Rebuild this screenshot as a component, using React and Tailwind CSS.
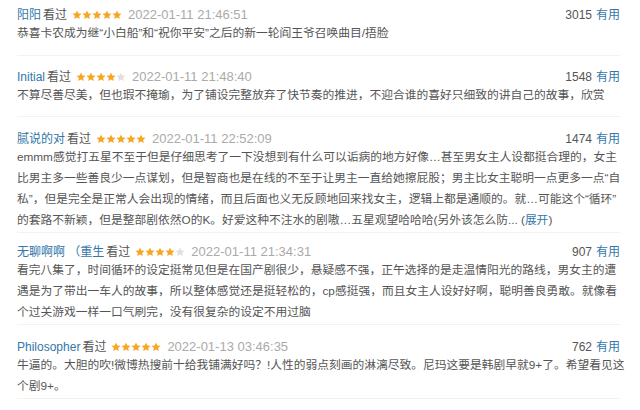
import React from 'react';

const reviews = [
  {
    name: '阳阳',
    stars: 5,
    time: '2022-01-11 21:46:51',
    votes: 3015,
    pt: 'pt-[8px]',
    pb: 'pb-[12px]',
    lines: ['恭喜卡农成为继“小白船”和“祝你平安”之后的新一轮阎王爷召唤曲目/捂脸'],
  },
  {
    name: 'Initial',
    stars: 4,
    time: '2022-01-11 21:48:40',
    votes: 1548,
    pt: 'pt-[14px]',
    pb: 'pb-[11px]',
    lines: ['不算尽善尽美，但也瑕不掩瑜，为了铺设完整放弃了快节奏的推进，不迎合谁的喜好只细致的讲自己的故事，欣赏'],
  },
  {
    name: '腻说的对',
    stars: 5,
    time: '2022-01-11 22:52:09',
    votes: 1474,
    pt: 'pt-[15px]',
    pb: 'pb-[2px]',
    more: true,
    lines: [
      'emmm感觉打五星不至于但是仔细思考了一下没想到有什么可以诟病的地方好像…甚至男女主人设都挺合理的，女主',
      '比男主多一些善良少一点谋划，但是智商也是在线的不至于让男主一直给她擦屁股；男主比女主聪明一点更多一点“自',
      '私”，但是完全是正常人会出现的情绪，而且后面也义无反顾地回来找女主，逻辑上都是通顺的。就…可能这个“循环”',
      '的套路不新颖，但是整部剧依然O的K。好爱这种不注水的剧嗷…五星观望哈哈哈(另外该怎么防...',
    ],
  },
  {
    name: '无聊啊啊 （重生',
    stars: 4,
    time: '2022-01-11 21:34:31',
    votes: 907,
    pt: 'pt-[12px]',
    pb: 'pb-[2px]',
    lines: [
      '看完八集了，时间循环的设定挺常见但是在国产剧很少，悬疑感不强，正午选择的是走温情阳光的路线，男女主的遭',
      '遇是为了带出一车人的故事，所以整体感觉还是挺轻松的，cp感挺强，而且女主人设好好啊，聪明善良勇敢。就像看',
      '个过关游戏一样一口气刷完，没有很复杂的设定不用过脑',
    ],
  },
  {
    name: 'Philosopher',
    stars: 5,
    time: '2022-01-13 03:46:35',
    votes: 762,
    pt: 'pt-[15px]',
    pb: 'pb-[2px]',
    lines: [
      '牛逼的。大胆的吹!微博热搜前十给我铺满好吗？!人性的弱点刻画的淋漓尽致。尼玛这要是韩剧早就9+了。希望看见这',
      '个剧9+。',
    ],
  },
  {
    name: '一只小鱼',
    stars: 5,
    time: '2022-01-12 10:21:07',
    votes: 688,
    pt: 'pt-[11px]',
    pb: 'pb-[2px]',
    lines: ['看完了'],
  },
];

function Star({ on }) {
  return (
    <svg width="10" height="10" viewBox="0 0 24 24" className="shrink-0">
      <path
        d="M12 1l3.2 7.1 7.7.8-5.8 5.2 1.7 7.6L12 17.8l-6.8 3.9 1.7-7.6-5.8-5.2 7.7-.8z"
        fill={on ? '#f7a623' : '#e0e0e0'}
      />
    </svg>
  );
}

function Review({ r }) {
  return (
    <div className={`border-b border-[#f2f2f2] ${r.pt} ${r.pb}`}>
      <div className="flex items-center justify-between h-[14px] leading-[14px] text-[12px]">
        <div className="flex items-center">
          <span className="text-[#3377aa]">{r.name}</span>
          <span className="text-[#555] ml-[2px]">看过</span>
          <span className="flex ml-[5px] mr-[6px]">
            {[0, 1, 2, 3, 4].map((i) => (
              <Star key={i} on={i < r.stars} />
            ))}
          </span>
          <span className="text-[#aaa] text-[13px] font-['Liberation_Sans']">{r.time}</span>
        </div>
        <div className="flex items-center">
          <span className="text-[#555] text-[12px] font-['Liberation_Sans']">{r.votes}</span>
          <span className="text-[#3377aa] text-[12px] ml-[4px]">有用</span>
        </div>
      </div>
      <div className="text-[11.75px] leading-[21px] text-[#555]">
        {r.lines.map((l, i) => (
          <div key={i} className="whitespace-nowrap">
            {l}
            {r.more && i === r.lines.length - 1 && (
              <>
                {' ('}
                <span className="text-[#3377aa]">展开</span>
                {')'}
              </>
            )}
          </div>
        ))}
      </div>
    </div>
  );
}

export default function App() {
  return (
    <div className="w-[640px] h-[410px] overflow-hidden bg-white pl-[17px] pr-[20px] font-['Liberation_Sans','Noto_Sans_CJK_SC',sans-serif]">
      {reviews.map((r, i) => (
        <Review key={i} r={r} />
      ))}
    </div>
  );
}
